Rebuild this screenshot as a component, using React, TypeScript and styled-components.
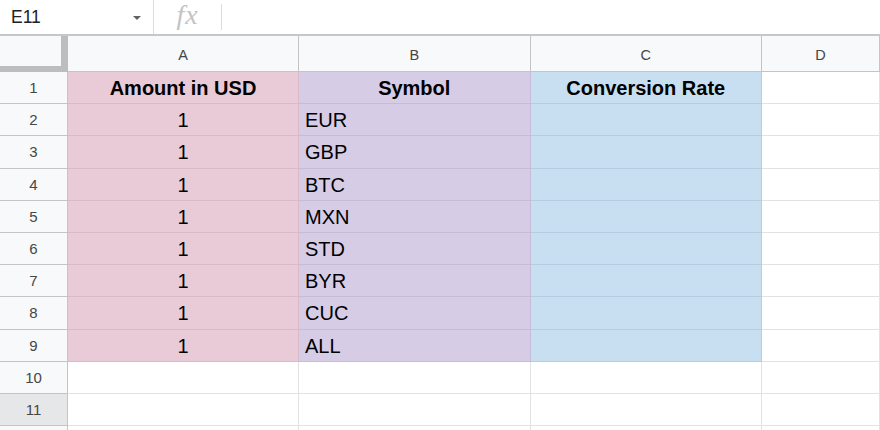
import React from 'react'
import styled, { createGlobalStyle } from 'styled-components'

const GlobalStyle = createGlobalStyle`
  html, body {
    margin: 0;
    padding: 0;
    background: #ffffff;
    font-family: "Liberation Sans", Arial, sans-serif;
    overflow: hidden;
  }
  * { box-sizing: border-box; }
`

type Tone = 'pink' | 'purple' | 'blue' | 'none'

const fills: Record<Tone, string> = {
  pink: '#e8cbd7',
  purple: '#d7cce6',
  blue: '#c8def1',
  none: '#ffffff',
}

const lines: Record<Tone, string> = {
  pink: '#d9bac7',
  purple: '#c6bbd8',
  blue: '#b5cde4',
  none: '#e2e2e2',
}

const Page = styled.div`
  width: 880px;
  height: 430px;
  display: flex;
  flex-direction: column;
  overflow: hidden;
`

const FormulaBar = styled.div`
  height: 36px;
  display: flex;
  align-items: center;
  border-bottom: 2px solid #c7c7c7;
  flex-shrink: 0;
`

const NameBox = styled.div`
  width: 154px;
  height: 34px;
  display: flex;
  align-items: center;
  justify-content: space-between;
  padding: 0 12px 0 11px;
  font-size: 17.5px;
  color: #202124;
  border-right: 1px solid #dadce0;
`

const Caret = styled.span`
  width: 0;
  height: 0;
  border-left: 4px solid transparent;
  border-right: 4px solid transparent;
  border-top: 4px solid #5f6368;
  margin-top: 2px;
`

const FxSlot = styled.div`
  width: 68px;
  height: 26px;
  display: flex;
  align-items: center;
  justify-content: center;
  border-right: 1px solid #dadce0;
`

const Fx = styled.span`
  font-family: "Liberation Serif", "DejaVu Serif", serif;
  font-style: italic;
  font-size: 28px;
  line-height: 34px;
  letter-spacing: 1px;
  color: #c4c4c4;
  margin-top: -4px;
`

const Grid = styled.div`
  display: grid;
  grid-template-columns: 68px 231px 231.5px 231.5px 1fr;
  grid-template-rows: 36px repeat(12, 32.2px);
`

const Corner = styled.div`
  background: #f8f9fa;
  border-right: 7px solid #bdbdbd;
  border-bottom: 6px solid #bdbdbd;
`

const ColHead = styled.div`
  background: #f8f9fa;
  border-right: 1px solid #c4c4c4;
  border-bottom: 1px solid #c4c4c4;
  display: flex;
  align-items: center;
  justify-content: center;
  font-size: 14.5px;
  color: #444746;
  padding-top: 2px;
`

const RowHead = styled.div<{ $active?: boolean }>`
  background: ${p => (p.$active ? '#e6e7e9' : '#f8f9fa')};
  background-image: ${p =>
    p.$active ? 'radial-gradient(#c6dcf0 0.6px, transparent 0.7px)' : 'none'};
  background-size: 6px 6px;
  border-right: 1px solid #c4c4c4;
  border-bottom: 1px solid #c4c4c4;
  display: flex;
  align-items: center;
  justify-content: center;
  font-size: 15px;
  color: #444746;
`

const Cell = styled.div<{ $tone: Tone; $align?: 'left' | 'center'; $bold?: boolean }>`
  background: ${p => fills[p.$tone]};
  border-right: 1px solid ${p => lines[p.$tone]};
  border-bottom: 1px solid ${p => lines[p.$tone]};
  display: flex;
  align-items: center;
  justify-content: ${p => (p.$align === 'left' ? 'flex-start' : 'center')};
  padding: 2px 6px 0;
  font-size: 20px;
  font-weight: ${p => (p.$bold ? 700 : 400)};
  color: #000000;
  white-space: nowrap;
  overflow: hidden;
`

const symbols = ['EUR', 'GBP', 'BTC', 'MXN', 'STD', 'BYR', 'CUC', 'ALL']

const App = () => {
  const rows = [] as React.ReactNode[]

  rows.push(
    <React.Fragment key="r1">
      <RowHead>1</RowHead>
      <Cell $tone="pink" $bold>Amount in USD</Cell>
      <Cell $tone="purple" $bold>Symbol</Cell>
      <Cell $tone="blue" $bold>Conversion Rate</Cell>
      <Cell $tone="none" />
    </React.Fragment>
  )

  symbols.forEach((sym, i) => {
    rows.push(
      <React.Fragment key={sym}>
        <RowHead>{i + 2}</RowHead>
        <Cell $tone="pink">1</Cell>
        <Cell $tone="purple" $align="left">{sym}</Cell>
        <Cell $tone="blue" />
        <Cell $tone="none" />
      </React.Fragment>
    )
  })

  // row 12 only peeks in at the bottom edge, so its number stays hidden
  for (let n = 10; n <= 12; n++) {
    rows.push(
      <React.Fragment key={n}>
        <RowHead $active={n === 11}>{n < 12 ? n : ''}</RowHead>
        <Cell $tone="none" />
        <Cell $tone="none" />
        <Cell $tone="none" />
        <Cell $tone="none" />
      </React.Fragment>
    )
  }

  return (
    <>
      <GlobalStyle />
      <Page>
        <FormulaBar>
          <NameBox>
            E11
            <Caret />
          </NameBox>
          <FxSlot>
            <Fx>fx</Fx>
          </FxSlot>
        </FormulaBar>
        <Grid>
          <Corner />
          <ColHead>A</ColHead>
          <ColHead>B</ColHead>
          <ColHead>C</ColHead>
          <ColHead>D</ColHead>
          {rows}
        </Grid>
      </Page>
    </>
  )
}

export default App
